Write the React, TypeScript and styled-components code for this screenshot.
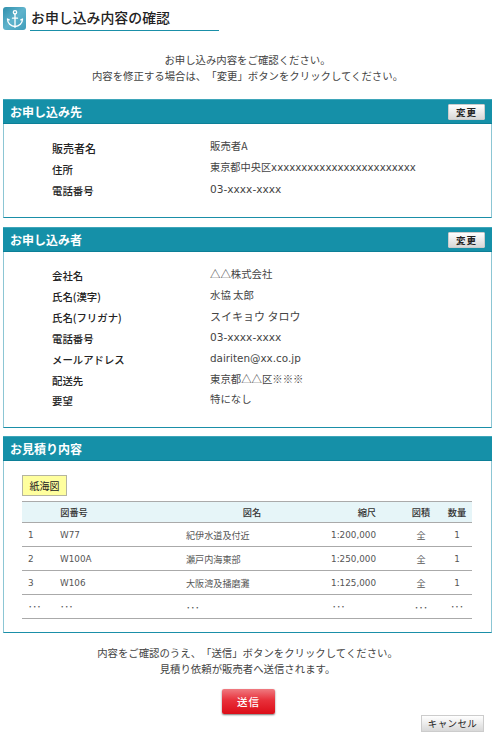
import styled, { createGlobalStyle } from 'styled-components';
import { Anchor } from 'lucide-react';

const jpFont = '"Noto Sans CJK JP", "Noto Sans", sans-serif';
const latinFont = `"DejaVu Sans", ${jpFont}`;

const GlobalStyle = createGlobalStyle`
	html,
	body {
		margin: 0;
		padding: 0;
		background: #fff;
		overflow: hidden;
		font-family: ${jpFont};
		color: #444;
		text-spacing-trim: space-all;
	}
`;

const Page = styled.div`
	width: 495px;
	height: 741px;
	padding: 7px 3px 0;
	box-sizing: border-box;
	overflow: hidden;
`;

const TitleRow = styled.div`
	display: flex;
	align-items: flex-start;
	gap: 4px;
	height: 23px;
`;

const TitleIcon = styled.div`
	width: 23px;
	height: 23px;
	display: flex;
	align-items: center;
	justify-content: center;
	border-radius: 3px;
	background: linear-gradient(135deg, #2f8fac 0%, #5fb3cc 50%, #3f9dba 100%);
	color: #fff;
`;

const Title = styled.h1`
	width: 188px;
	height: 23px;
	margin: 0;
	border-bottom: 1px solid #1a8fa8;
	font-size: 13.9px;
	font-weight: 500;
	line-height: 21px;
	color: #222;
	padding-left: 1px;
	box-sizing: content-box;
`;

const Message = styled.p<{ $top: number }>`
	margin: ${(p) => p.$top}px 0 0;
	font-size: 10.4px;
	line-height: 16px;
	text-align: center;
	color: #444;
`;

const Panel = styled.section<{ $top: number; $height: number }>`
	margin-top: ${(p) => p.$top}px;
	height: ${(p) => p.$height}px;
	box-sizing: border-box;
	border: 1px solid #1a8fa8;
	border-left-color: #8cc6d4;
	border-right-color: #8cc6d4;
	border-top: none;
`;

const PanelHeader = styled.header`
	display: flex;
	align-items: center;
	justify-content: space-between;
	height: 25px;
	margin: 0 -1px;
	padding: 0 7px;
	box-sizing: border-box;
	background: #1590a8;
	border-top: 1px solid #3ea6ba;
	border-bottom: 1px solid #0c7f97;
`;

const PanelTitle = styled.h2`
	margin: 0;
	font-size: 12px;
	font-weight: 700;
	color: #fff;
`;

const ChangeButton = styled.button`
	width: 37px;
	height: 16px;
	padding: 0;
	border: 1px solid #ccc;
	border-radius: 1px;
	background: linear-gradient(#fff, #d8d8d8);
	font-family: inherit;
	font-size: 9.5px;
	font-weight: 700;
	letter-spacing: 1px;
	line-height: 14px;
	color: #222;
`;

const InfoList = styled.dl<{ $top: number }>`
	margin: ${(p) => p.$top}px 0 0 48px;
`;

const InfoRow = styled.div<{ $height: number }>`
	display: grid;
	grid-template-columns: 158px 1fr;
	height: ${(p) => p.$height}px;
	align-items: center;
`;

const InfoLabel = styled.dt<{ $size?: number }>`
	font-size: ${(p) => p.$size ?? 10.4}px;
	font-weight: 500;
	color: #222;
	line-height: 14px;
`;

const InfoValue = styled.dd<{ $size?: number; $latin?: boolean }>`
	margin: 0;
	font-family: ${(p) => (p.$latin ? latinFont : jpFont)};
	font-size: ${(p) => p.$size ?? (p.$latin ? 10.2 : 10.4)}px;
	line-height: 14px;
	color: #444;
	white-space: nowrap;
	transform: translateY(-2px);
`;

const QuoteBody = styled.div`
	padding: 14px 20px 0 18px;
`;

const ChartTag = styled.div`
	width: 45px;
	height: 21px;
	box-sizing: border-box;
	border: 1px solid #b5b5a0;
	background: #ffff9e;
	font-size: 10px;
	line-height: 19px;
	text-align: center;
	color: #222;
`;

const QuoteTable = styled.table`
	width: 450px;
	margin-top: 5px;
	border-collapse: separate;
	border-spacing: 0;
	table-layout: fixed;
	font-size: 9.2px;
`;

const HeadCell = styled.th<{ $align?: string; $width: number; $left?: number; $right?: number }>`
	box-sizing: border-box;
	height: 22px;
	padding: 0 ${(p) => p.$right ?? 0}px 0 ${(p) => p.$left ?? 0}px;
	width: ${(p) => p.$width}px;
	background: #e6f5f8;
	border-top: 1px solid #aaa;
	border-bottom: 1px solid #aaa;
	font-weight: 500;
	text-align: ${(p) => p.$align ?? 'center'};
	color: #333;
`;

const BodyCell = styled.td<{ $align?: string; $left?: number; $right?: number; $latin?: boolean }>`
	box-sizing: border-box;
	height: 24px;
	padding: 0 ${(p) => p.$right ?? 0}px 0 ${(p) => p.$left ?? 0}px;
	border-bottom: 1px solid #aaa;
	font-family: ${(p) => (p.$latin ? latinFont : jpFont)};
	font-size: ${(p) => (p.$latin ? 8.8 : 9.1)}px;
	text-align: ${(p) => p.$align ?? 'left'};
	color: #555;
	white-space: nowrap;
`;

const SendButton = styled.button`
	display: block;
	width: 53px;
	height: 25px;
	margin: 12px 0 0 219px;
	padding: 0;
	border: none;
	border-radius: 2px;
	background: linear-gradient(#ef7a80 0%, #e8303a 45%, #dc0d18 100%);
	box-shadow: 0 1px 2px #777;
	font-family: inherit;
	font-size: 10.5px;
	font-weight: 500;
	letter-spacing: 1px;
	color: #fff;
`;

const CancelRow = styled.div`
	display: flex;
	justify-content: flex-end;
	margin-top: 1px;
	padding-right: 8px;
`;

const CancelButton = styled.button`
	width: 63px;
	height: 17px;
	padding: 0;
	border: 1px solid #ccc;
	background: linear-gradient(#fff, #d8d8d8);
	font-family: inherit;
	font-size: 9.5px;
	line-height: 15px;
	letter-spacing: 0.4px;
	color: #222;
`;

type Row = {
	label: string;
	value: string;
	height: number;
	labelSize?: number;
	valueSize?: number;
	latin?: boolean;
};

const sellerRows: Row[] = [
	{ label: '販売者名', value: '販売者A', height: 22, labelSize: 11 },
	{ label: '住所', value: '東京都中央区xxxxxxxxxxxxxxxxxxxxxxxx', height: 21, latin: true },
	{ label: '電話番号', value: '03-xxxx-xxxx', height: 21, latin: true, valueSize: 10.6 },
];

const buyerRows: Row[] = [
	{ label: '会社名', value: '△△株式会社', height: 21 },
	{ label: '氏名(漢字)', value: '水協 太郎', height: 21 },
	{ label: '氏名(フリガナ)', value: 'スイキョウ タロウ', height: 21, valueSize: 11 },
	{ label: '電話番号', value: '03-xxxx-xxxx', height: 21, latin: true, valueSize: 10.6 },
	{ label: 'メールアドレス', value: 'dairiten@xx.co.jp', height: 21, latin: true, valueSize: 10.4 },
	{ label: '配送先', value: '東京都△△区※※※', height: 21 },
	{ label: '要望', value: '特になし', height: 19 },
];

const charts = [
	['1', 'W77', '紀伊水道及付近', '1:200,000', '全', '1'],
	['2', 'W100A', '瀬戸内海東部', '1:250,000', '全', '1'],
	['3', 'W106', '大阪湾及播磨灘', '1:125,000', '全', '1'],
	['･･･', '･･･', '･･･', '･･･', '･･･', '･･･'],
];

function InfoRows({ rows }: { rows: Row[] }) {
	return (
		<InfoList $top={13}>
			{rows.map((row) => (
				<InfoRow key={row.label} $height={row.height}>
					<InfoLabel $size={row.labelSize}>{row.label}</InfoLabel>
					<InfoValue $size={row.valueSize} $latin={row.latin}>
						{row.value}
					</InfoValue>
				</InfoRow>
			))}
		</InfoList>
	);
}

function App() {
	return (
		<Page>
			<GlobalStyle />
			<TitleRow>
				<TitleIcon>
					<Anchor size={20} strokeWidth={1.6} />
				</TitleIcon>
				<Title>お申し込み内容の確認</Title>
			</TitleRow>

			<Message $top={22}>
				お申し込み内容をご確認ください。
				<br />
				内容を修正する場合は、「変更」ボタンをクリックしてください。
			</Message>

			<Panel $top={15} $height={119}>
				<PanelHeader>
					<PanelTitle>お申し込み先</PanelTitle>
					<ChangeButton>変更</ChangeButton>
				</PanelHeader>
				<InfoRows rows={sellerRows} />
			</Panel>

			<Panel $top={9} $height={201}>
				<PanelHeader>
					<PanelTitle>お申し込み者</PanelTitle>
					<ChangeButton>変更</ChangeButton>
				</PanelHeader>
				<InfoRows rows={buyerRows} />
			</Panel>

			<Panel $top={8} $height={197}>
				<PanelHeader>
					<PanelTitle>お見積り内容</PanelTitle>
				</PanelHeader>
				<QuoteBody>
					<ChartTag>紙海図</ChartTag>
					<QuoteTable>
						<thead>
							<tr>
								<HeadCell $width={33} />
								<HeadCell $width={38}>図番号</HeadCell>
								<HeadCell $width={227} $left={91}>図名</HeadCell>
								<HeadCell $width={80} $align="right" $right={24}>縮尺</HeadCell>
								<HeadCell $width={42}>図積</HeadCell>
								<HeadCell $width={30}>数量</HeadCell>
							</tr>
						</thead>
						<tbody>
							{charts.map((row, i) => (
								<tr key={i}>
									<BodyCell $left={6} $latin>{row[0]}</BodyCell>
									<BodyCell $left={5} $latin>{row[1]}</BodyCell>
									<BodyCell $left={93}>{row[2]}</BodyCell>
									{i === charts.length - 1 ? (
										<BodyCell $left={12} $latin>{row[3]}</BodyCell>
									) : (
										<BodyCell $align="right" $right={24} $latin>{row[3]}</BodyCell>
									)}
									<BodyCell $align="center">{row[4]}</BodyCell>
									<BodyCell $align="center" $latin>{row[5]}</BodyCell>
								</tr>
							))}
						</tbody>
					</QuoteTable>
				</QuoteBody>
			</Panel>

			<Message $top={12}>
				内容をご確認のうえ、「送信」ボタンをクリックしてください。
				<br />
				見積り依頼が販売者へ送信されます。
			</Message>

			<SendButton>送信</SendButton>
			<CancelRow>
				<CancelButton>キャンセル</CancelButton>
			</CancelRow>
		</Page>
	);
}

export default App;
